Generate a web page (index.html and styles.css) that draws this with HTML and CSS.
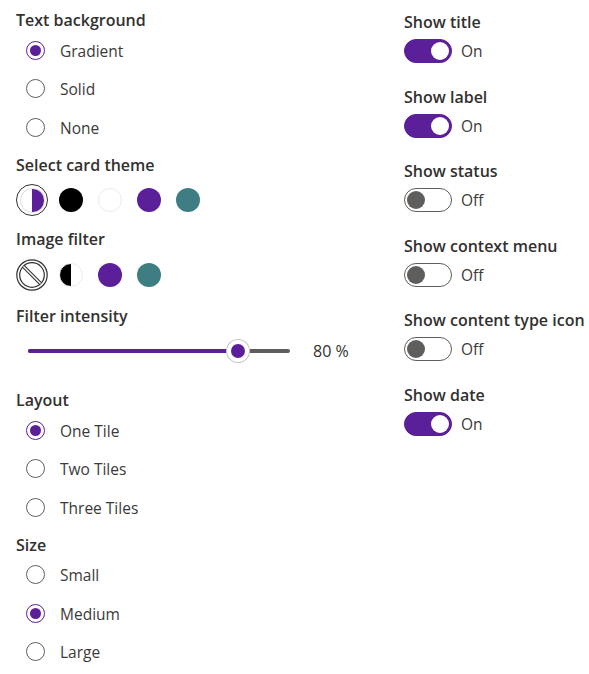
FILE: index.html
```html
<!DOCTYPE html>
<html>
<head>
<meta charset="utf-8">
<link rel="stylesheet" href="styles.css">
</head>
<body>
<div class="panel">
  <div class="col left">
    <div class="field f1">
      <div class="heading">Text background</div>
      <div class="choices">
        <div class="choice"><span class="radio checked"></span><span class="lbl">Gradient</span></div>
        <div class="choice"><span class="radio"></span><span class="lbl">Solid</span></div>
        <div class="choice"><span class="radio"></span><span class="lbl">None</span></div>
      </div>
    </div>
    <div class="field f2">
      <div class="heading">Select card theme</div>
      <div class="swatches">
        <div class="sw selected"><span class="dot half-purple"></span></div>
        <div class="sw"><span class="dot black"></span></div>
        <div class="sw"><span class="dot white"></span></div>
        <div class="sw"><span class="dot purple"></span></div>
        <div class="sw"><span class="dot teal"></span></div>
      </div>
    </div>
    <div class="field f3">
      <div class="heading">Image filter</div>
      <div class="swatches">
        <div class="sw">
          <svg class="blocked" width="32" height="32" viewBox="0 0 32 32">
            <defs><clipPath id="inner"><circle cx="16" cy="16" r="12"/></clipPath></defs>
            <circle cx="16" cy="16" r="15.2" fill="none" stroke="#323130" stroke-width="1.2"/>
            <circle cx="16" cy="16" r="12.3" fill="none" stroke="#323130" stroke-width="1.2"/>
            <g clip-path="url(#inner)">
              <line x1="5" y1="5" x2="27" y2="27" stroke="#323130" stroke-width="3.6"/>
              <line x1="5" y1="5" x2="27" y2="27" stroke="#ffffff" stroke-width="1.4"/>
            </g>
          </svg>
        </div>
        <div class="sw"><span class="dot half-black"></span></div>
        <div class="sw"><span class="dot purple"></span></div>
        <div class="sw"><span class="dot teal"></span></div>
      </div>
    </div>
    <div class="field f4">
      <div class="heading">Filter intensity</div>
      <div class="slider-row">
        <div class="slider">
          <div class="track"><div class="fill" style="width:80%"></div></div>
          <div class="thumb" style="left:80%"></div>
        </div>
        <span class="value">80 %</span>
      </div>
    </div>
    <div class="field f5">
      <div class="heading">Layout</div>
      <div class="choices">
        <div class="choice"><span class="radio checked"></span><span class="lbl">One Tile</span></div>
        <div class="choice"><span class="radio"></span><span class="lbl">Two Tiles</span></div>
        <div class="choice"><span class="radio"></span><span class="lbl">Three Tiles</span></div>
      </div>
    </div>
    <div class="field f6">
      <div class="heading">Size</div>
      <div class="choices">
        <div class="choice"><span class="radio"></span><span class="lbl">Small</span></div>
        <div class="choice"><span class="radio checked"></span><span class="lbl">Medium</span></div>
        <div class="choice"><span class="radio"></span><span class="lbl">Large</span></div>
      </div>
    </div>
  </div>
  <div class="col right">
    <div class="tfield">
      <div class="heading">Show title</div>
      <div class="trow"><span class="toggle on"><span class="knob"></span></span><span class="lbl">On</span></div>
    </div>
    <div class="tfield">
      <div class="heading">Show label</div>
      <div class="trow"><span class="toggle on"><span class="knob"></span></span><span class="lbl">On</span></div>
    </div>
    <div class="tfield">
      <div class="heading">Show status</div>
      <div class="trow"><span class="toggle"><span class="knob"></span></span><span class="lbl">Off</span></div>
    </div>
    <div class="tfield">
      <div class="heading">Show context menu</div>
      <div class="trow"><span class="toggle"><span class="knob"></span></span><span class="lbl">Off</span></div>
    </div>
    <div class="tfield">
      <div class="heading">Show content type icon</div>
      <div class="trow"><span class="toggle"><span class="knob"></span></span><span class="lbl">Off</span></div>
    </div>
    <div class="tfield">
      <div class="heading">Show date</div>
      <div class="trow"><span class="toggle on"><span class="knob"></span></span><span class="lbl">On</span></div>
    </div>
  </div>
</div>
</body>
</html>
```
FILE: styles.css
```css
html, body {
  margin: 0;
  padding: 0;
  background: #ffffff;
}
body {
  font-family: "Open Sans", "Noto Sans", Arial, sans-serif;
  color: #323130;
  -webkit-font-smoothing: antialiased;
}
.panel {
  display: grid;
  grid-template-columns: 404px 1fr;
  padding-top: 9px;
}
.col.left {
  padding-left: 16px;
}
.col.right {
  padding-top: 2px;
}
.heading {
  font-size: 16px;
  font-weight: 600;
  line-height: 22px;
  height: 22px;
  white-space: nowrap;
  color: #323130;
}
.lbl {
  font-size: 15.5px;
  line-height: 22px;
  white-space: nowrap;
  color: #3b3a39;
}
.choices {
  display: flex;
  flex-direction: column;
}
.choice {
  height: 38.5px;
  display: flex;
  align-items: center;
  padding-left: 10px;
}
.choice .lbl {
  padding-top: 1px;
}
.radio {
  width: 19px;
  height: 19px;
  box-sizing: border-box;
  border: 1px solid #605e5c;
  border-radius: 50%;
  margin-right: 15px;
  display: flex;
  align-items: center;
  justify-content: center;
  flex: none;
}
.radio.checked {
  border-color: #5c1f9a;
}
.radio.checked::after {
  content: "";
  width: 11px;
  height: 11px;
  border-radius: 50%;
  background: #5c1f9a;
}
.f2 { margin-top: 7px; }
.f3 { margin-top: 12px; }
.f4 { margin-top: 14px; }
.f5 { margin-top: 24px; }
.f6 { margin-top: 7px; }
.swatches {
  display: flex;
  gap: 7px;
  height: 32px;
}
.f2 .swatches { margin-top: 8.5px; }
.f3 .swatches { margin-top: 9px; }
.sw {
  width: 32px;
  height: 32px;
  box-sizing: border-box;
  border-radius: 50%;
  display: flex;
  align-items: center;
  justify-content: center;
  flex: none;
}
.sw.selected {
  border: 1.5px solid #323130;
}
.dot {
  width: 24px;
  height: 24px;
  border-radius: 50%;
  box-sizing: border-box;
}
.sw.selected .dot {
  width: 25px;
  height: 25px;
}
.black { background: #000000; }
.white { background: #ffffff; border: 1px solid #edebe9; }
.purple { background: #5c1f9a; }
.teal { background: #3e7d82; }
.half-purple {
  background: linear-gradient(to right, #ffffff 50%, #5c1f9a 50%);
  border: 1px solid #e1dfdd;
}
.half-black {
  background: linear-gradient(to right, #000000 50%, #ffffff 50%);
  border: 1px solid #edebe9;
}
.blocked { display: block; }
.slider-row {
  display: flex;
  align-items: center;
  height: 28px;
  margin-top: 10px;
  padding-left: 12px;
}
.slider {
  position: relative;
  width: 262px;
  height: 28px;
  display: flex;
  align-items: center;
}
.track {
  width: 100%;
  height: 4px;
  border-radius: 2px;
  background: #605e5c;
  overflow: hidden;
}
.fill {
  height: 100%;
  background: #5c1f9a;
}
.thumb {
  position: absolute;
  top: 50%;
  width: 22px;
  height: 22px;
  box-sizing: border-box;
  margin-left: -11px;
  margin-top: -11px;
  border-radius: 50%;
  background: #5c1f9a;
  border: 4px solid #ffffff;
  box-shadow: 0 0 0 1px #c8c6c4;
}
.value {
  margin-left: 23px;
  font-size: 16px;
  line-height: 22px;
}
.tfield {
  height: 52px;
  margin-bottom: 22.6px;
}
.trow {
  display: flex;
  align-items: center;
  height: 24px;
  margin-top: 6px;
}
.toggle {
  width: 48px;
  height: 24px;
  box-sizing: border-box;
  border-radius: 12px;
  border: 1px solid #605e5c;
  background: #ffffff;
  display: flex;
  align-items: center;
  padding: 0 2px;
  margin-right: 9px;
  flex: none;
}
.toggle .knob {
  width: 18px;
  height: 18px;
  border-radius: 50%;
  background: #605e5c;
}
.toggle.on {
  background: #5c1f9a;
  border-color: #5c1f9a;
  justify-content: flex-end;
}
.toggle.on .knob {
  background: #ffffff;
}
```
